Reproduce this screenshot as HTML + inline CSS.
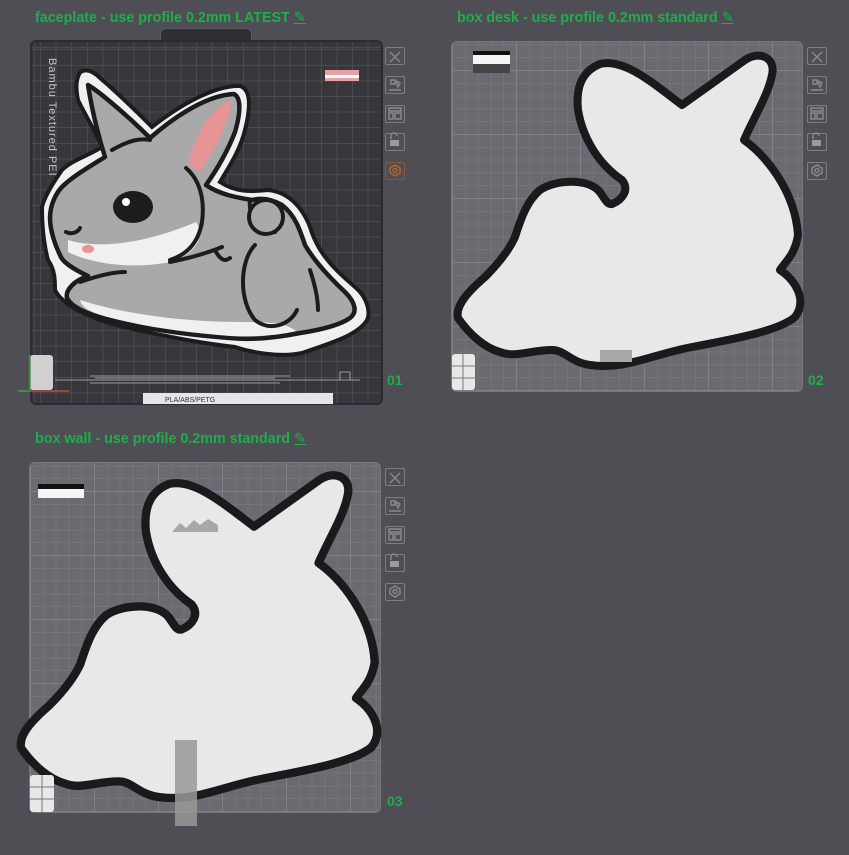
<!DOCTYPE html>
<html><head><meta charset="utf-8"><style>
*{margin:0;padding:0;box-sizing:border-box}
body{width:849px;height:855px;background:#4e4e54;position:relative;overflow:hidden;font-family:"Liberation Sans",sans-serif}
.t{position:absolute;color:#1fae4b;font-weight:bold;font-size:14.3px;white-space:nowrap}
.t u{font-weight:normal}
.num{position:absolute;color:#1fae4b;font-weight:bold;font-size:14px}
.p1{position:absolute;left:30px;top:40px;width:353px;height:365px;border-radius:6px;background-color:#36363b;
background-image:repeating-linear-gradient(90deg,#4a4a50 0 1px,transparent 1px 15.6px),repeating-linear-gradient(0deg,#4a4a50 0 1px,transparent 1px 15.6px);background-position:8px 6px;border:2px solid #2c2c30}
.tab{position:absolute;left:160px;top:28px;width:92px;height:14px;background:#2e2e33;border-radius:6px 6px 0 0;border:1px solid #5a5a60;border-bottom:none}
.pl{position:absolute;width:352px;height:351px;border-radius:6px;background-color:#6a6a70;
background-image:repeating-linear-gradient(90deg,#808086 0 1px,transparent 1px 64px),repeating-linear-gradient(0deg,#808086 0 1px,transparent 1px 64px),repeating-linear-gradient(90deg,#747479 0 1px,transparent 1px 12.8px),repeating-linear-gradient(0deg,#747479 0 1px,transparent 1px 12.8px);border:1px solid #76767b}
.ic{position:absolute;width:20px;height:18px;border:1.5px solid #7d7d82;border-radius:2px}
svg{position:absolute;left:0;top:0}
</style></head><body>
<div class="t" style="left:35px;top:10px">faceplate - use profile 0.2mm LATEST <u>✎</u></div>
<div class="t" style="left:457px;top:10px">box desk - use profile 0.2mm standard <u>✎</u></div>
<div class="t" style="left:35px;top:431px">box wall - use profile 0.2mm standard <u>✎</u></div>

<div class="tab"></div>
<div class="p1"></div>
<div class="pl" style="left:451px;top:41px"></div>
<div class="pl" style="left:29px;top:462px"></div>

<div class="num" style="left:387px;top:372px">01</div>
<div class="num" style="left:808px;top:372px">02</div>
<div class="num" style="left:387px;top:793px">03</div>

<div class="ic" style="left:385px;top:47px"></div><div class="ic" style="left:385px;top:76px"></div><div class="ic" style="left:385px;top:105px"></div><div class="ic" style="left:385px;top:133px"></div><div class="ic" style="left:385px;top:162px;border-color:#8a5a3a"></div>
<div class="ic" style="left:807px;top:47px"></div><div class="ic" style="left:807px;top:76px"></div><div class="ic" style="left:807px;top:105px"></div><div class="ic" style="left:807px;top:133px"></div><div class="ic" style="left:807px;top:162px"></div>
<div class="ic" style="left:385px;top:468px"></div><div class="ic" style="left:385px;top:497px"></div><div class="ic" style="left:385px;top:526px"></div><div class="ic" style="left:385px;top:554px"></div><div class="ic" style="left:385px;top:583px"></div>

<div style="position:absolute;left:46px;top:58px;transform-origin:0 0;transform:rotate(90deg) translate(0,-12px);color:#c8c8c8;font-size:11px;white-space:nowrap;letter-spacing:1px">Bambu Textured PEI</div>

<svg width="849" height="855" viewBox="0 0 849 855">
<g fill="none" stroke="#8a8a8f" stroke-width="1.4">
<path d="M390 52l10 10M400 52l-10 10"/><path d="M812 52l10 10M822 52l-10 10"/><path d="M390 473l10 10M400 473l-10 10"/>
<path d="M389 90h12M391 80h4v4h-4zM396 81l4 2-2 4z"/><path d="M811 90h12M813 80h4v4h-4zM818 81l4 2-2 4z"/><path d="M389 511h12M391 501h4v4h-4zM396 502l4 2-2 4z"/>
<path d="M389 108h12v3h-12zM389 113h4v6h-4zM395 113h6v6h-6z"/><path d="M811 108h12v3h-12zM811 113h4v6h-4zM817 113h6v6h-6z"/><path d="M389 529h12v3h-12zM389 534h4v6h-4zM395 534h6v6h-6z"/>
<path d="M391 139v-3a3 3 0 0 1 6 0"/><path d="M813 139v-3a3 3 0 0 1 6 0"/><path d="M391 560v-3a3 3 0 0 1 6 0"/>
<path d="M395 165l5 3v5l-5 3-5-3v-5z" stroke="#c0622a"/><circle cx="395" cy="170.5" r="2" stroke="#c0622a"/>
<path d="M817 165l5 3v5l-5 3-5-3v-5z"/><circle cx="817" cy="170.5" r="2"/>
<path d="M395 586l5 3v5l-5 3-5-3v-5z"/><circle cx="395" cy="591.5" r="2"/>
</g>
<g fill="#9a9a9f"><rect x="390" y="140" width="9" height="6"/><rect x="812" y="140" width="9" height="6"/><rect x="390" y="561" width="9" height="6"/></g>

<!-- faceplate bunny -->
<path d="M78,77 C80,68 90,68 100,78 C120,95 140,115 152,127 C180,105 215,85 240,86 C252,90 250,110 245,130 C240,150 230,165 220,182 C235,192 250,192 268,190 C290,192 305,210 312,233 C320,255 335,270 355,287 C368,298 372,315 365,323 C355,335 335,342 302,353 C280,358 250,352 235,347 C200,343 168,337 120,326 C90,318 62,305 55,290 C55,280 55,270 48,260 C44,245 42,225 42,207 C45,195 55,180 62,170 C72,160 90,155 102,147 C95,130 85,115 78,100 C76,90 76,82 78,77 Z" fill="#f0f0f0" stroke="#1c1c1e" stroke-width="4"/>
<g stroke="#1c1c1e" stroke-width="4.5" stroke-linejoin="round" stroke-linecap="round">
<path d="M88,85 C100,92 130,118 150,138 C180,112 210,95 234,94 C242,98 240,115 235,132 C228,150 218,168 206,185 C220,195 240,198 252,200 C260,198 270,198 282,205 C295,215 300,230 305,245 C315,262 330,278 345,292 C355,302 358,312 350,318 C340,325 320,330 300,333 C275,338 250,340 230,338 C190,335 150,330 110,320 C90,315 72,308 67,298 C65,290 75,280 88,276 C75,270 62,262 60,255 C55,245 50,230 50,218 C50,205 56,192 64,185 C75,175 92,165 105,157 C98,135 92,110 88,85 Z" fill="#a9a9a9"/>
</g>
<path d="M80,300 C120,313 180,322 240,322 C265,322 285,322 296,331 C275,336 250,337 230,336 C190,333 150,328 112,318 C95,314 82,309 80,300 Z" fill="#f0f0f0"/>
<path d="M68,240 C100,250 150,242 196,222 C206,236 196,254 170,262 C130,270 90,263 68,252 Z" fill="#f0f0f0"/>
<path d="M232,100 C215,104 196,130 188,165 L200,172 C214,150 228,125 232,100 Z" fill="#e89395"/>
<g stroke="#1c1c1e" stroke-width="4" fill="none" stroke-linecap="round">
<path d="M112,150 C130,140 140,138 150,140"/>
<path d="M186,168 C200,180 205,200 202,222 C198,245 185,255 170,260"/>
<path d="M170,262 C190,258 210,252 222,247"/>
<path d="M215,250 C220,260 225,262 230,258"/>
<path d="M80,282 C100,275 115,272 125,272"/>
<path d="M255,245 C240,260 238,300 255,320 C270,332 290,325 297,310"/>
<path d="M250,200 C248,215 258,228 275,232"/>
<path d="M310,270 C315,285 318,300 318,310"/>
<path d="M66,232 C72,235 78,232 80,228"/>
</g>
<circle cx="266" cy="217" r="17" fill="#a9a9a9" stroke="#1c1c1e" stroke-width="4"/>
<ellipse cx="133" cy="207" rx="20" ry="16" fill="#1c1c1e"/><circle cx="126" cy="202" r="4" fill="#fff"/>
<ellipse cx="88" cy="249" rx="6" ry="4" fill="#e89395"/>
<rect x="325" y="70" width="34" height="11" fill="#e8a0a0"/><rect x="325" y="75" width="34" height="3" fill="#fff"/>
<g stroke="#bdbdbd" stroke-width="0.8" fill="none"><path d="M55 380h305M90 376h200M90 383h190M95 378h180M340 380v-8h10v8"/></g>
<rect x="30" y="355" width="23" height="35" rx="3" fill="#d0d0d0"/><path d="M30 355v35M18 391h50" stroke="#3a3" stroke-width="1.5"/><path d="M30 391h40" stroke="#c33" stroke-width="1.5"/>
<rect x="143" y="393" width="190" height="11" fill="#e5e5e5"/><text x="165" y="402" font-size="7" fill="#333">PLA/ABS/PETG</text>

<!-- box desk -->
<path d="M598,190 C604,196 606,205 612,204 C622,200 630,190 622,180 C600,165 583,140 578,110 C576,90 580,72 600,64 C625,58 655,85 682,105 L745,60 C760,50 776,58 772,75 C768,95 755,115 744,140 C765,155 795,190 798,235 C795,255 785,262 780,270 C795,280 808,300 795,317 C780,330 740,338 692,347 C650,355 625,370 590,365 C570,362 565,350 552,350 C530,350 515,358 500,352 C485,348 470,335 458,318 C455,305 470,290 485,277 C500,262 510,248 515,237 C522,215 528,200 540,190 C555,180 585,178 598,190 Z" fill="#e8e8e8" stroke="#1a1a1c" stroke-width="8" stroke-linejoin="round"/>
<rect x="600" y="350" width="32" height="12" fill="#a8a8a8"/>
<rect x="473" y="51" width="37" height="22" fill="#444"/><rect x="473" y="55" width="37" height="9" fill="#f5f5f5"/><rect x="473" y="51" width="37" height="4" fill="#111"/>
<g><rect x="452" y="354" width="23" height="36" rx="3" fill="#e8e8e8"/><path d="M452 366h23M452 378h23M463 354v36" stroke="#777" stroke-width="1"/></g>

<!-- box wall -->
<g transform="translate(-430,426) translate(630,215) scale(1.04) translate(-630,-215)">
<path d="M598,190 C604,196 606,205 612,204 C622,200 630,190 622,180 C600,165 583,140 578,110 C576,90 580,72 600,64 C625,58 655,85 682,105 L745,60 C760,50 776,58 772,75 C768,95 755,115 744,140 C765,155 795,190 798,235 C795,255 785,262 780,270 C795,280 808,300 795,317 C780,330 740,338 692,347 C650,355 625,370 590,365 C570,362 565,350 552,350 C530,350 515,358 500,352 C485,348 470,335 458,318 C455,305 470,290 485,277 C500,262 510,248 515,237 C522,215 528,200 540,190 C555,180 585,178 598,190 Z" fill="#e8e8e8" stroke="#1a1a1c" stroke-width="8" stroke-linejoin="round"/>
</g>
<path d="M172 532l8-9 6 5 8-8 6 5 8-6 10 6v7h-46z" fill="#a8a8a8"/>
<rect x="175" y="740" width="22" height="86" fill="#999" opacity="0.85"/>
<rect x="38" y="484" width="46" height="14" fill="#f5f5f5"/><rect x="38" y="484" width="46" height="5" fill="#111"/>
<g><rect x="30" y="775" width="24" height="37" rx="3" fill="#e8e8e8"/><path d="M30 787h24M30 799h24M42 775v37" stroke="#777" stroke-width="1"/></g>
</svg>
</body></html>
